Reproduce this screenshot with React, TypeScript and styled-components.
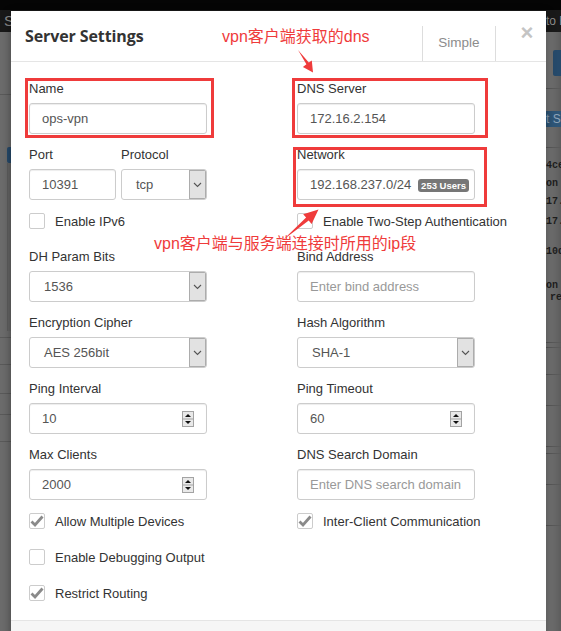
import styled, { createGlobalStyle } from 'styled-components'

const GlobalStyle = createGlobalStyle`
  html, body {
    margin: 0;
    padding: 0;
  }
  body {
    font-family: 'Liberation Sans', Arial, sans-serif;
    font-size: 13px;
    color: #333;
    overflow: hidden;
  }
  * {
    box-sizing: border-box;
  }
`

type Mark = { top: number; right: number; bottom: number; left: number }

function Chevron() {
  return (
    <svg width="9" height="6" viewBox="0 0 9 6">
      <polyline points="1,1 4.5,4.5 8,1" fill="none" stroke="#555" strokeWidth="1.1" />
    </svg>
  )
}

function Spinner() {
  return (
    <SpinBox>
      <svg width="12" height="16" viewBox="0 0 12 16">
        <rect x="0.5" y="0.5" width="11" height="15" fill="#e9e9e9" stroke="#a3a3a3" />
        <line x1="0.5" y1="8" x2="11.5" y2="8" stroke="#a3a3a3" />
        <polygon points="3,6 9,6 6,3" fill="#111" />
        <polygon points="3,10 9,10 6,13" fill="#111" />
      </svg>
    </SpinBox>
  )
}

function Select({ value, width }: { value: string; width: number }) {
  return (
    <SelectBox $width={width}>
      <SelectValue>{value}</SelectValue>
      <SelectArrow>
        <Chevron />
      </SelectArrow>
    </SelectBox>
  )
}

function Check({ label, checked }: { label: string; checked?: boolean }) {
  return (
    <CheckRow>
      <CheckBox>
        {checked && (
          <svg width="16" height="16" viewBox="0 0 16 16">
            <path d="M2.5 8.5 L6 12 L13.5 3.5" fill="none" stroke="#8a8a8a" strokeWidth="2.8" />
          </svg>
        )}
      </CheckBox>
      <CheckLabel>{label}</CheckLabel>
    </CheckRow>
  )
}

function Field({ label, mark, children }: { label: string; mark?: Mark; children: React.ReactNode }) {
  return (
    <Group>
      {mark && <MarkBox $m={mark} />}
      <Label>{label}</Label>
      {children}
    </Group>
  )
}

export default function App() {
  return (
    <Page>
      <GlobalStyle />
      <Backdrop>
        <TopBar>
          <BrandText>S</BrandText>
          <NavText>to B</NavText>
        </TopBar>
        <BackBody>
          <LeftRail>
            <RailLine $gap={62} />
            <RailButton $gap={52} />
            <RailPanel />
            <RailLine $gap={6} />
            <RailLine $gap={26} />
            <RailLine $gap={28} />
            <RailLine $gap={20} />
            <RailLine $gap={26} />
          </LeftRail>
          <Middle />
          <RightRail>
            <RailButton $gap={18} $height={26} />
            <RailLine $gap={12} />
            <RailTab $gap={22}>t S</RailTab>
            <RailLine $gap={20} />
            <LogText $gap={12}>4ce</LogText>
            <LogText $gap={6}>on</LogText>
            <LogText $gap={6}>17.</LogText>
            <LogText $gap={8}>17.</LogText>
            <LogText $gap={18}>10d</LogText>
            <LogText $gap={22}>on</LogText>
            <LogText $gap={0} $indent={4}>re</LogText>
            <RailLine $gap={38} />
            <RailLine $gap={4} />
            <RailLine $gap={26} />
            <RailLine $gap={30} />
            <RailLine $gap={40} />
            <RailLine $gap={6} />
            <RailLine $gap={30} />
            <RailLine $gap={40} />
          </RightRail>
        </BackBody>
      </Backdrop>

      <Modal>
        <Header>
          <Title>Server Settings</Title>
          <Tab>Simple</Tab>
          <Close>×</Close>
        </Header>
        <Body>
          <Column>
            <Field label="Name" mark={{ top: -2, right: -7, bottom: -4, left: -4 }}>
              <Input $width={178}>ops-vpn</Input>
            </Field>
            <PairRow>
              <Field label="Port">
                <Input $width={87}>10391</Input>
              </Field>
              <Field label="Protocol">
                <Select value="tcp" width={86} />
              </Field>
            </PairRow>
            <Check label="Enable IPv6" />
            <Field label="DH Param Bits">
              <Select value="1536" width={178} />
            </Field>
            <Field label="Encryption Cipher">
              <Select value="AES 256bit" width={178} />
            </Field>
            <Field label="Ping Interval">
              <Input $width={178}>
                10
                <Spinner />
              </Input>
            </Field>
            <Field label="Max Clients">
              <Input $width={178}>
                2000
                <Spinner />
              </Input>
            </Field>
            <Check label="Allow Multiple Devices" checked />
            <Check label="Enable Debugging Output" />
            <Check label="Restrict Routing" checked />
          </Column>
          <Column>
            <Field label="DNS Server" mark={{ top: -2, right: -13, bottom: -4, left: -5 }}>
              <Input $width={178}>172.16.2.154</Input>
            </Field>
            <Field label="Network" mark={{ top: 1, right: -12, bottom: -7, left: -4 }}>
              <Input $width={178}>
                192.168.237.0/24
                <Badge>253 Users</Badge>
              </Input>
            </Field>
            <Check label="Enable Two-Step Authentication" />
            <Field label="Bind Address">
              <Input $width={178} $placeholder>Enter bind address</Input>
            </Field>
            <Field label="Hash Algorithm">
              <Select value="SHA-1" width={178} />
            </Field>
            <Field label="Ping Timeout">
              <Input $width={178}>
                60
                <Spinner />
              </Input>
            </Field>
            <Field label="DNS Search Domain">
              <Input $width={178} $placeholder>Enter DNS search domain</Input>
            </Field>
            <Check label="Inter-Client Communication" checked />
          </Column>
        </Body>
        <Footer />
      </Modal>

      <Note $x={222} $y={27}>vpn客户端获取的dns</Note>
      <Note $x={154} $y={234}>vpn客户端与服务端连接时所用的ip段</Note>
      <Arrows width="561" height="631" viewBox="0 0 561 631">
        <polygon points="298,50 308.8,62.6 311.8,60.6 313,72.5 302.9,66.9 306.4,64.2" fill="#ef3b3b" />
        <polygon points="283,240 308.7,220.6 311.6,224 318.5,209.5 303.2,214.2 306.1,217.6" fill="#ef3b3b" />
      </Arrows>
    </Page>
  )
}

const Page = styled.div`
  position: relative;
  width: 561px;
  height: 631px;
  overflow: hidden;
`

const Backdrop = styled.div`
  display: flex;
  flex-direction: column;
  height: 100%;
  background: #727272;
`

const TopBar = styled.div`
  display: flex;
  justify-content: space-between;
  align-items: center;
  height: 32px;
  padding-top: 10px;
  background: linear-gradient(#050505 0 10px, #191919 10px);
  overflow: hidden;
`

const BrandText = styled.span`
  padding-left: 4px;
  color: #8c8c8c;
  font-size: 15px;
  line-height: 16px;
`

const NavText = styled.span`
  margin-right: -12px;
  color: #8f8f8f;
  font-size: 12px;
  width: 27px;
`

const BackBody = styled.div`
  display: flex;
  flex: 1;
`

const LeftRail = styled.div`
  width: 11px;
  display: flex;
  flex-direction: column;
  background: #6c6c6c;
`

const Middle = styled.div`
  flex: 1;
`

const RightRail = styled.div`
  width: 15px;
  display: flex;
  flex-direction: column;
  background: linear-gradient(90deg, #7a7a7a, #5c5c5c);
  overflow: hidden;
`

const RailLine = styled.div<{ $gap: number }>`
  margin-top: ${({ $gap }) => $gap}px;
  height: 1px;
  background: #5a5a5a;
`

const RailButton = styled.div<{ $gap: number; $height?: number }>`
  margin-top: ${({ $gap }) => $gap}px;
  margin-left: 7px;
  height: ${({ $height }) => $height ?? 16}px;
  background: #264a6b;
  border-radius: 2px 0 0 2px;
`

const RailPanel = styled.div`
  margin-left: 7px;
  height: 168px;
  border-left: 1px solid #5e5e5e;
  background: #666;
`

const RailTab = styled.div<{ $gap: number }>`
  margin-top: ${({ $gap }) => $gap}px;
  height: 16px;
  background: #2e5678;
  color: #8ea4b8;
  font-size: 12px;
  line-height: 16px;
  white-space: nowrap;
`

const LogText = styled.div<{ $gap: number; $indent?: number }>`
  margin-top: ${({ $gap }) => $gap}px;
  padding-left: ${({ $indent }) => $indent ?? 0}px;
  font-family: 'Liberation Mono', monospace;
  font-size: 10px;
  font-weight: bold;
  line-height: 12px;
  color: #1e1e1e;
  white-space: nowrap;
`

const Modal = styled.div`
  position: absolute;
  top: 11px;
  left: 11px;
  width: 535px;
  background: #fff;
  box-shadow: 0 3px 9px rgba(0, 0, 0, 0.4);
`

const Header = styled.div`
  display: flex;
  align-items: flex-end;
  height: 51px;
  padding-left: 14px;
  border-bottom: 1px solid #e5e5e5;
`

const Title = styled.h4`
  align-self: center;
  margin: 0;
  font-family: 'Open Sans', sans-serif;
  font-size: 16px;
  font-weight: 700;
  color: #333;
  letter-spacing: -0.1px;
`

const Tab = styled.div`
  margin-left: auto;
  width: 74px;
  height: 35px;
  border-left: 1px solid #ddd;
  border-right: 1px solid #ddd;
  color: #8c8c8c;
  font-size: 13.5px;
  line-height: 34px;
  text-align: center;
`

const Close = styled.div`
  align-self: flex-start;
  margin: 13px 9px 0 21px;
  width: 20px;
  color: #c4c4c4;
  font-size: 22px;
  font-weight: bold;
  line-height: 18px;
  text-align: center;
`

const Body = styled.div`
  display: grid;
  grid-template-columns: 268px 1fr;
  padding: 18px 18px 0;
`

const Column = styled.div`
  display: flex;
  flex-direction: column;
  align-items: flex-start;
`

const PairRow = styled.div`
  display: flex;
  gap: 5px;
`

const Group = styled.div`
  position: relative;
  margin-bottom: 12px;
`

const MarkBox = styled.div<{ $m: Mark }>`
  position: absolute;
  top: ${({ $m }) => $m.top}px;
  right: ${({ $m }) => $m.right}px;
  bottom: ${({ $m }) => $m.bottom}px;
  left: ${({ $m }) => $m.left}px;
  border: 3px solid #ef3b3b;
  pointer-events: none;
`

const Label = styled.label`
  display: block;
  margin-bottom: 5px;
  font-size: 13px;
  line-height: 18px;
  color: #333;
`

const Input = styled.div<{ $width: number; $placeholder?: boolean }>`
  position: relative;
  display: flex;
  align-items: center;
  width: ${({ $width }) => $width}px;
  height: 31px;
  padding: 0 12px;
  border: 1px solid #ccc;
  border-radius: 3px;
  box-shadow: inset 0 1px 1px rgba(0, 0, 0, 0.075);
  font-size: 13px;
  color: ${({ $placeholder }) => ($placeholder ? '#999' : '#555')};
  white-space: nowrap;
`

const SpinBox = styled.span`
  position: absolute;
  right: 12px;
  top: 7px;
  display: flex;
`

const Badge = styled.span`
  position: absolute;
  right: 5px;
  top: 9px;
  padding: 0 3px;
  height: 13px;
  border-radius: 3px;
  background: #777;
  color: #fff;
  font-size: 9.5px;
  font-weight: bold;
  line-height: 13px;
`

const SelectBox = styled.div<{ $width: number }>`
  display: flex;
  align-items: stretch;
  width: ${({ $width }) => $width}px;
  height: 31px;
  border: 1px solid #ccc;
  border-radius: 3px;
  overflow: hidden;
  font-size: 13px;
  color: #555;
`

const SelectValue = styled.span`
  flex: 1;
  display: flex;
  align-items: center;
  padding-left: 14px;
`

const SelectArrow = styled.span`
  width: 17px;
  display: flex;
  align-items: center;
  justify-content: center;
  border: 1px solid #acacac;
  background: #e2e2e2;
`

const CheckRow = styled.div`
  display: flex;
  align-items: center;
  gap: 10px;
  height: 18px;
  margin-bottom: 18px;
`

const CheckBox = styled.span`
  width: 16px;
  height: 16px;
  display: flex;
  border: 1px solid #ccc;
  border-radius: 2px;
  background: #fff;

  svg {
    margin: -1px;
  }
`

const CheckLabel = styled.span`
  font-size: 13px;
  color: #333;
`

const Footer = styled.div`
  height: 40px;
  border-top: 1px solid #e5e5e5;
  background: #f6f6f6;
`

const Note = styled.div<{ $x: number; $y: number }>`
  position: absolute;
  left: ${({ $x }) => $x}px;
  top: ${({ $y }) => $y}px;
  font-family: 'Liberation Sans', 'Noto Sans CJK SC', sans-serif;
  font-size: 16px;
  line-height: 20px;
  color: #ef3b3b;
  white-space: nowrap;
`

const Arrows = styled.svg`
  position: absolute;
  top: 0;
  left: 0;
  pointer-events: none;
`
